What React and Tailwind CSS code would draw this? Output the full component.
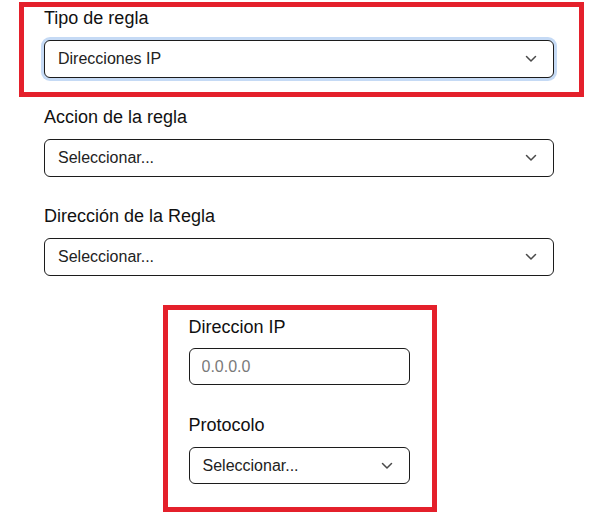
import React from "react";

function Chevron() {
  return (
    <svg width="12" height="8" viewBox="0 0 12 8" fill="none" className="shrink-0">
      <path d="M1.5 1.5 L6 6 L10.5 1.5" stroke="#4a4a4a" strokeWidth="1.5" strokeLinecap="round" strokeLinejoin="round" />
    </svg>
  );
}

function SelectBox(props) {
  const ring = props.focused ? " ring-[3px] ring-[#c5daf5]" : "";
  return (
    <div className={"flex flex-row items-center justify-between w-full border border-[#1c1c1c] rounded-[6px] bg-white pl-[13px] pr-[16px] " + props.height + ring}>
      <span className="text-[16px] text-[#222222]">{props.value}</span>
      <Chevron />
    </div>
  );
}

function Field(props) {
  return (
    <div className="flex flex-col">
      <label className="text-[18px] leading-5 text-[#111111]">{props.label}</label>
      <div className={props.tight ? "mt-[11px]" : "mt-3"}>{props.children}</div>
    </div>
  );
}

export default function App() {
  return (
    <div className="w-[597px] h-[518px] bg-white pt-[2px] pl-[19px] pr-[13px] flex flex-col" style={{ fontFamily: '"Liberation Sans", Arial, sans-serif' }}>
      <div className="border-[5px] border-[#e4202b] pt-px pl-5 pr-[25px] pb-[14px]">
        <Field label="Tipo de regla">
          <SelectBox value="Direcciones IP" height="h-[38px]" focused />
        </Field>
      </div>

      <div className="mt-[10px] pl-[25px] pr-[30px] flex flex-col gap-[29px]">
        <Field label="Accion de la regla">
          <SelectBox value="Seleccionar..." height="h-[38px]" />
        </Field>
        <Field label="Dirección de la Regla">
          <SelectBox value="Seleccionar..." height="h-[38px]" />
        </Field>
      </div>

      <div className="flex justify-center mt-[29px] pr-[4px]">
        <div className="w-[274px] border-[5px] border-[#e4202b] pt-[7px] pl-[21px] pr-[22px] pb-[23px] flex flex-col gap-[30px]">
          <Field label="Direccion IP" tight>
            <input
              type="text"
              placeholder="0.0.0.0"
              className="w-full h-[37px] border border-[#1c1c1c] rounded-[6px] px-[12px] text-[16px] text-[#222222] placeholder:text-[#7a7a7a] outline-none"
            />
          </Field>
          <Field label="Protocolo">
            <SelectBox value="Seleccionar..." height="h-[37px]" />
          </Field>
        </div>
      </div>
    </div>
  );
}
